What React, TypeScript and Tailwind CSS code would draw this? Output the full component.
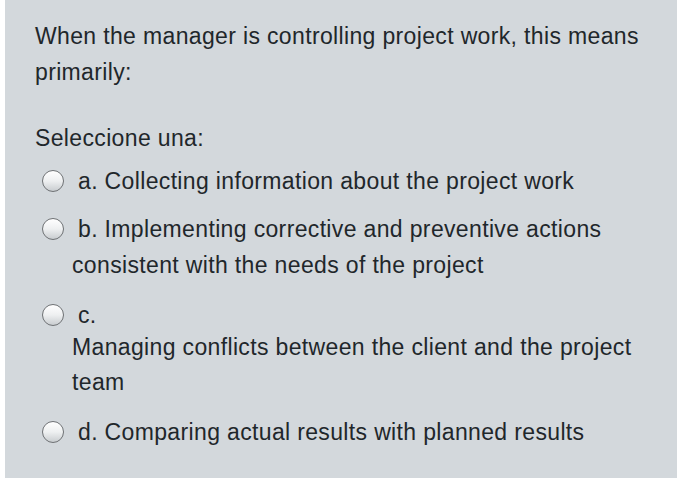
import React from "react";

function Radio() {
  return (
    <span className="inline-block w-[22px] h-[22px] rounded-full border-[1.5px] border-[#6f7275] bg-gradient-to-b from-[#ffffff] via-[#eef0f1] to-[#c9cdd0] align-[-3px] mr-[14px] indent-0 tracking-normal" />
  );
}

export default function App() {
  return (
    <div className="w-[700px] h-[480px] bg-white" style={{ fontFamily: '"Liberation Sans", Arial, sans-serif' }}>
      <div className="ml-[5px] w-[672px] h-[478px] bg-[#d3d8dc] text-[#1f272b] text-[23px] tracking-[0.35px] pl-[30px] pr-[28px] pt-[18px]">
        <div className="leading-[36px]">
          When the manager is controlling project work, this means primarily:
        </div>
        <div className="leading-[36px] mt-[30px]">Seleccione una:</div>
        <div className="mt-[7px] pl-[37px] -indent-[30px] leading-[36px]">
          <Radio />a. Collecting information about the project work
        </div>
        <div className="mt-[12px] pl-[37px] -indent-[30px] leading-[36px]">
          <Radio />b. Implementing corrective and preventive actions consistent with the needs of the project
        </div>
        <div className="mt-[14px] pl-[37px] -indent-[30px] leading-[36px]">
          <Radio />c.
          <p className="indent-0 leading-[35px] -mt-[3px]">Managing conflicts between the client and the project team</p>
        </div>
        <div className="mt-[14px] pl-[37px] -indent-[30px] leading-[36px]">
          <Radio />d. Comparing actual results with planned results
        </div>
      </div>
    </div>
  );
}
